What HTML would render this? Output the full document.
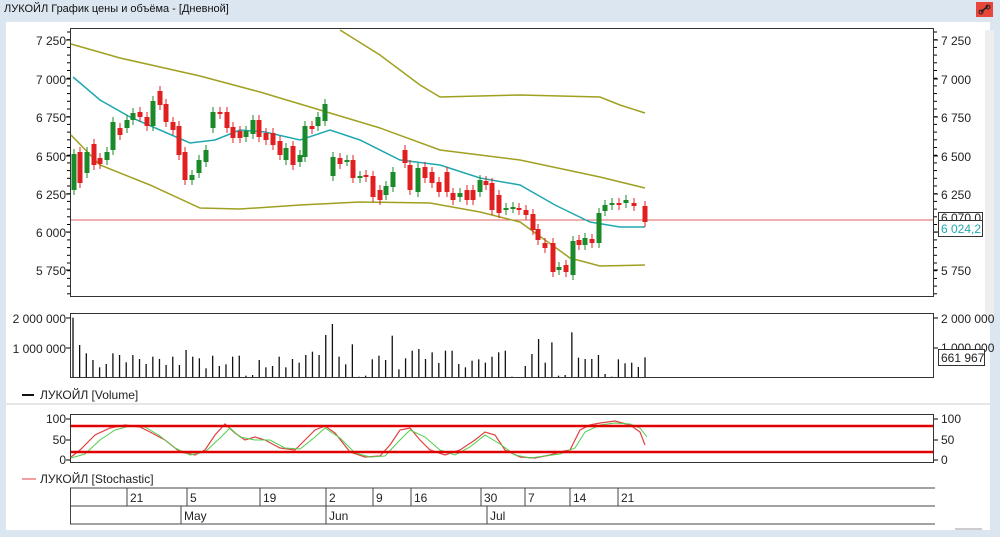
<!DOCTYPE html>
<html><head><meta charset="utf-8"><style>
body{margin:0;width:1000px;height:537px;overflow:hidden;background:#dce6f1;font-family:"Liberation Sans","Noto Sans CJK JP",sans-serif;}
#title{position:absolute;left:4px;top:3px;font-size:11px;color:#111}
#panel{position:absolute;left:6px;top:22px;width:984px;height:508px;background:#fff}
#ic{position:absolute;left:976px;top:2px;width:17px;height:15px;background:#e8463a}
svg{position:absolute;left:0;top:0}
</style></head><body>
<div id="title">ЛУКОЙЛ График цены и объёма - [Дневной]</div>
<div id="panel"></div>
<div id="ic"><svg width="17" height="15"><path d="M5 10 L12 4" stroke="#222" stroke-width="1.5"/><circle cx="5" cy="10" r="2" fill="none" stroke="#222"/><circle cx="12" cy="5" r="2" fill="none" stroke="#222"/></svg></div>
<svg id="s" width="1000" height="537" font-family="Liberation Sans, sans-serif" font-size="12"></svg>
<script>
var s=document.getElementById('s'),h='';
function L(x1,y1,x2,y2,c,w){h+='<line x1="'+x1+'" y1="'+y1+'" x2="'+x2+'" y2="'+y2+'" stroke="'+(c||'#000')+'" stroke-width="'+(w||1)+'"/>';}
function T(x,y,t,c,a){h+='<text x="'+x+'" y="'+y+'" fill="'+(c||'#222')+'"'+(a?' text-anchor="end"':'')+'>'+t+'</text>';}
function P(d,c,w){h+='<polyline points="'+d+'" fill="none" stroke="'+c+'" stroke-width="'+(w||1.5)+'"/>';}
h+='<rect x="985" y="30" width="9" height="290" fill="#eee"/>';
h+='<rect x="70.5" y="28.5" width="863" height="268" fill="#fff" stroke="#333"/>';
var pl=[[7250,40],[7000,79],[6750,117],[6500,156],[6250,194],[6000,232],[5750,270]];
pl.forEach(function(p){var l=(p[0]+'').replace(/(\d)(\d{3})$/,'$1 $2');T(66,p[1]+5,l,'#222',1);if(p[0]!=6000)T(941,p[1]+5,l);L(66,p[1],70,p[1]);L(934,p[1],938,p[1]);});
for(var y=32;y<296;y+=7.7){L(67,y,70,y);L(934,y,937,y);}
L(71,220,933,220,'#e06060',1);
P('71,44 120,58 200,76 260,92 320,110 380,128 440,150 520,160 600,177 645,188','#a0a020');
P('340,30 380,55 420,85 440,97 520,95 600,97 620,105 645,113','#a0a020');
P('71,135 100,165 150,185 200,208 240,209 300,205 360,202 430,203 480,212 520,222 545,240 570,258 600,266 645,265','#a0a020');
P('73,77 100,100 130,117 160,130 190,143 215,140 240,130 265,132 300,140 330,130 360,140 400,160 440,165 480,178 520,185 555,205 590,222 620,227 645,227','#20a8b0');
var c=[[74,154,190,'g'],[80,152,183,'r'],[87,152,173,'g'],[94,144,165,'r'],[100,158,164,'r'],[107,152,160,'g'],[113,122,150,'g'],[120,128,135,'r'],[127,120,128,'g'],[133,113,120,'g'],[140,112,117,'r'],[147,117,126,'r'],[153,101,126,'g'],[160,91,105,'r'],[166,104,122,'r'],[173,122,130,'r'],[179,126,155,'r'],[185,152,180,'r'],[192,175,180,'g'],[199,160,173,'g'],[206,150,162,'g'],[213,112,128,'g'],[220,112,114,'r'],[227,112,128,'r'],[233,127,138,'r'],[240,131,138,'r'],[246,131,137,'g'],[253,120,134,'g'],[259,120,137,'r'],[266,133,140,'r'],[273,133,145,'r'],[280,141,155,'r'],[286,148,160,'g'],[293,146,165,'r'],[300,155,162,'g'],[305,126,157,'g'],[312,126,129,'r'],[318,117,126,'g'],[325,104,121,'g'],[333,157,176,'g'],[340,158,164,'r'],[347,160,161,'g'],[353,160,178,'r'],[360,176,178,'g'],[366,175,177,'r'],[373,176,197,'r'],[380,190,200,'r'],[386,186,195,'g'],[393,172,187,'g'],[405,150,163,'r'],[410,165,190,'r'],[418,168,192,'g'],[425,167,178,'r'],[432,172,183,'r'],[439,182,192,'r'],[447,172,192,'r'],[453,193,200,'r'],[460,193,197,'g'],[467,190,200,'r'],[473,190,200,'r'],[480,180,192,'g'],[486,181,185,'r'],[492,183,210,'r'],[499,195,213,'r'],[506,208,210,'g'],[513,207,208,'g'],[519,208,210,'r'],[526,210,215,'r'],[533,214,230,'r'],[538,229,240,'r'],[545,243,248,'r'],[553,243,272,'r'],[559,267,270,'g'],[566,265,272,'r'],[573,241,275,'g'],[579,240,245,'r'],[585,238,245,'g'],[592,239,243,'r'],[599,213,243,'g'],[605,205,211,'g'],[612,203,205,'g'],[619,203,205,'r'],[626,200,203,'g'],[634,203,206,'r'],[645,206,222,'r']];
c.forEach(function(k){var col=k[3]=='g'?'#1a8a2a':'#e02020';L(k[0],k[1]-5,k[0],k[2]+5,col,1);h+='<rect x="'+(k[0]-2.5)+'" y="'+k[1]+'" width="5" height="'+Math.max(2,k[2]-k[1])+'" fill="'+col+'"/>';});
h+='<rect x="938.5" y="212.5" width="44" height="12" fill="#fff" stroke="#333"/>';T(941,222,'6 070,0');
h+='<rect x="938.5" y="220.5" width="44" height="16" fill="#fff" stroke="#333"/>';T(941,233,'6 024,2','#20a8b0');
// volume
h+='<rect x="70.5" y="313.5" width="863" height="64" fill="#fff" stroke="#333"/>';
T(66,323,'2 000 000','#222',1);T(66,353,'1 000 000','#222',1);T(941,323,'2 000 000');T(941,352,'1 000 000');
L(934,318,938,318);L(934,348,938,348);L(66,318,70,318);L(66,348,70,348);
h+='<rect x="938.5" y="349.5" width="46" height="16" fill="#fff" stroke="#333"/>';T(941,362,'661 967');
var v=[38,120,145,165,187,177,145,150,172,150,162,177,155,162,180,155,180,135,155,160,190,152,183,178,155,152,212,210,165,187,183,155,187,162,173,150,140,150,90,57,155,178,118,215,212,163,152,165,92,193,160,137,132,162,142,174,137,137,177,187,167,163,173,155,142,137,215,217,183,147,102,173,112,212,210,82,158,162,162,150,207,215,163,175,173,186,157];
v.forEach(function(t,i){var x=73+i*(645-73)/(v.length-1);L(x,305+t/3,x,377,'#111',1.3);});
L(22,395,34,395,'#111',2);T(40,399,'ЛУКОЙЛ [Volume]');
L(6,404,990,404,'#ccc',1);
h+='<rect x="70.5" y="414.5" width="863" height="48" fill="#fff" stroke="#333"/>';
[[100,419],[50,440],[0,460]].forEach(function(p){T(66,p[1]+4,p[0],'#222',1);T(941,p[1]+4,p[0]);L(66,p[1],70,p[1]);L(934,p[1],938,p[1]);});
P('71,457 80,450 95,435 110,428 125,425 140,427 150,432 165,440 180,452 195,455 205,450 215,435 225,424 235,433 245,440 255,437 265,440 280,448 295,450 305,440 315,430 325,426 335,433 350,452 365,457 380,456 390,445 400,430 410,428 420,440 430,450 445,455 460,450 475,440 485,432 495,435 505,450 520,457 535,458 550,455 560,452 570,450 580,430 590,425 600,423 615,421 630,425 640,432 645,445','#e04040',1.2);
P('71,458 85,454 100,440 115,430 130,426 145,427 160,436 175,448 190,455 205,452 220,438 230,428 240,437 255,440 270,440 285,448 300,449 315,437 325,428 340,438 355,453 370,457 385,456 400,440 410,430 425,437 440,450 455,455 470,447 485,435 500,444 515,455 530,458 545,456 560,454 575,448 585,432 600,425 615,423 630,424 640,428 647,437','#50d050',1);
L(71,426,933,426,'#e00000',2.5);L(71,452,933,452,'#e00000',2.5);
L(22,479,36,479,'#e04040',1);T(40,483,'ЛУКОЙЛ [Stochastic]');
L(70,488,935,488,'#444');L(70,506,935,506,'#444');L(70,524,935,524,'#444');L(70.5,488,70.5,524,'#444');
[[127,'21'],[187,'5'],[260,'19'],[326,'2'],[373,'9'],[411,'16'],[481,'30'],[525,'7'],[570,'14'],[618,'21']].forEach(function(d){L(d[0],488,d[0],506,'#444');T(d[0]+3,502,d[1]);});
[[181,'May'],[326,'Jun'],[487,'Jul']].forEach(function(d){L(d[0],506,d[0],524,'#444');T(d[0]+3,520,d[1]);});
L(955,529,982,529,'#999');
s.innerHTML=h;
</script>
</body></html>
